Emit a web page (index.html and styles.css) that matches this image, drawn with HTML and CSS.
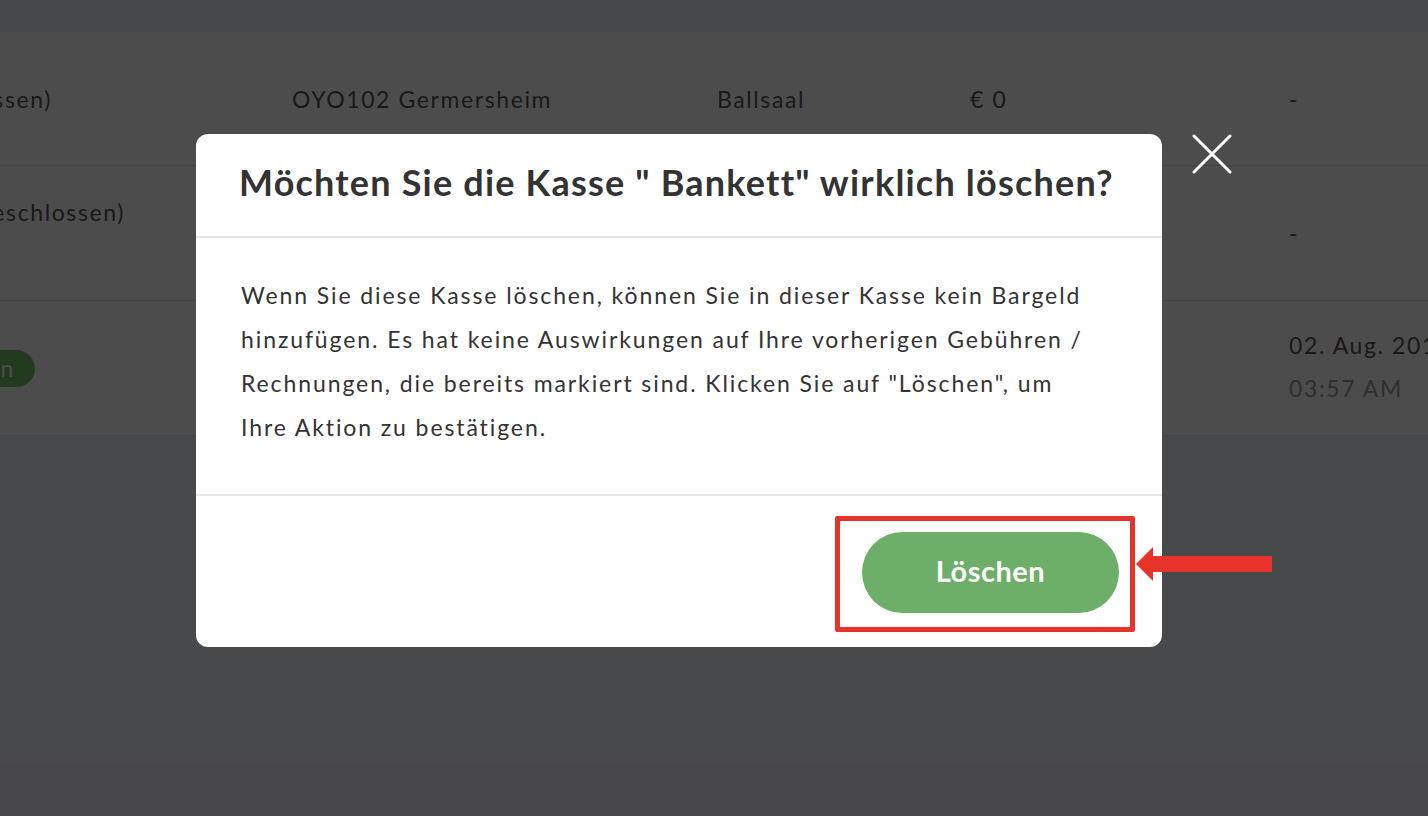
FILE: index.html
```html
<!DOCTYPE html>
<html lang="de">
<head>
<meta charset="utf-8">
<title>Kasse löschen</title>
<link rel="stylesheet" href="styles.css">
</head>
<body>
<div class="page">
  <div class="topbar"></div>
  <div class="table">
    <div class="row r1">
      <div class="cell c1">Kasse (Geschlossen)</div>
      <div class="cell c2">OYO102 Germersheim</div>
      <div class="cell c3">Ballsaal</div>
      <div class="cell c4">€ 0</div>
      <div class="cell c5">-</div>
    </div>
    <div class="row r2">
      <div class="cell c1">Bankett (Geschlossen)</div>
      <div class="cell c2"></div>
      <div class="cell c3"></div>
      <div class="cell c4"></div>
      <div class="cell c5">-</div>
    </div>
    <div class="row r3">
      <div class="cell c1"><span class="pill">Offen</span></div>
      <div class="cell c2"></div>
      <div class="cell c3"></div>
      <div class="cell c4"></div>
      <div class="cell c5">
        <div class="date">02. Aug. 2019</div>
        <div class="time">03:57 AM</div>
      </div>
    </div>
  </div>
</div>

<div class="overlay"></div>

<div class="modal">
  <div class="modal-header">
    <h2 class="modal-title">Möchten Sie die Kasse " Bankett" wirklich löschen?</h2>
  </div>
  <div class="modal-body">
    <p>Wenn Sie diese Kasse löschen, können Sie in dieser Kasse kein Bargeld hinzufügen. Es hat keine Auswirkungen auf Ihre vorherigen Gebühren / Rechnungen, die bereits markiert sind. Klicken Sie auf "Löschen", um Ihre Aktion zu bestätigen.</p>
  </div>
  <div class="modal-footer">
    <button class="btn-delete">Löschen</button>
  </div>
</div>

<button class="close" aria-label="Schließen">
  <svg width="40" height="40" viewBox="0 0 40 40"><path d="M2 2 L38 38 M38 2 L2 38" stroke="#fff" stroke-width="3" stroke-linecap="round" fill="none"/></svg>
</button>

<div class="annot-box"></div>
<svg class="annot-arrow" width="140" height="36" viewBox="0 0 140 36">
  <polygon points="0,17 17,0 17,9 136,9 136,25 17,25 17,34" fill="#e8332a"/>
</svg>
</body>
</html>
```

FILE: styles.css
```css
* { box-sizing: border-box; }
html, body {
  margin: 0;
  padding: 0;
  width: 1428px;
  height: 816px;
  overflow: hidden;
}
body {
  font-family: Lato, "Noto Sans", sans-serif;
  background: #f0f3f8;
  position: relative;
}
.page {
  width: 1428px;
  height: 816px;
  overflow: hidden;
  background: #f0f3f8;
}
.topbar {
  height: 32px;
  background: #edf0f3;
}
.table {
  margin-left: -300px;
  background: #fff;
}
.row {
  display: grid;
  grid-template-columns: 592px 425px 253px 319px 400px;
  height: 135px;
  align-items: center;
  border-bottom: 1px solid #e4e4e4;
  font-size: 23px;
  letter-spacing: 1.6px;
  color: #555;
  white-space: nowrap;
}
.r1 { height: 134px; }
.cell { overflow: visible; }
.c1 { text-align: right; }
.r1 .c1 { padding-right: 240px; }
.r2 .c1 { padding-right: 167px; align-self: start; padding-top: 32px; }
.r3 .c1 { padding-right: 257px; }
.pill {
  display: inline-block;
  background: #75c171;
  color: #fff;
  border-radius: 19px;
  height: 37px;
  line-height: 37px;
  padding: 0 20px 0 16px;
  font-size: 23px;
}
.date { color: #555; line-height: 43px; margin-top: -2px; }
.time { color: #9c9c9c; line-height: 43px; }

.overlay {
  position: absolute;
  inset: 0;
  background: rgba(0, 0, 0, 0.7);
}

.modal {
  position: absolute;
  left: 196px;
  top: 134px;
  width: 966px;
  height: 513px;
  background: #fff;
  border-radius: 12px;
  color: #333;
  display: flex;
  flex-direction: column;
}
.modal-header {
  height: 104px;
  border-bottom: 2px solid #e7e7e7;
  padding: 0 40px 6px 43px;
  display: flex;
  align-items: center;
}
.modal-title {
  margin: 0;
  font-size: 36px;
  font-weight: 700;
  letter-spacing: 1.2px;
  color: #333;
  white-space: nowrap;
}
.modal-body {
  height: 258px;
  border-bottom: 2px solid #e7e7e7;
  padding: 35px 70px 0 45px;
}
.modal-body p {
  margin: 0;
  font-size: 23px;
  line-height: 44px;
  letter-spacing: 1.9px;
  color: #333;
}
.modal-footer {
  flex: 1;
  display: flex;
  justify-content: flex-end;
  align-items: flex-start;
  padding: 36px 43px 0 0;
}
.btn-delete {
  width: 257px;
  height: 81px;
  border: none;
  border-radius: 41px;
  background: #6daf68;
  color: #fff;
  font-family: Lato, "Noto Sans", sans-serif;
  font-size: 29px;
  font-weight: 700;
  letter-spacing: 0.5px;
  padding: 0 0 5px;
  cursor: pointer;
}

.close {
  position: absolute;
  left: 1192px;
  top: 134px;
  width: 40px;
  height: 40px;
  padding: 0;
  border: none;
  background: none;
  cursor: pointer;
}
.close svg { display: block; }

.annot-box {
  position: absolute;
  left: 835px;
  top: 516px;
  width: 300px;
  height: 116px;
  border: 5px solid #e8332a;
  border-radius: 2px;
}
.annot-arrow {
  position: absolute;
  left: 1136px;
  top: 547px;
}
```
